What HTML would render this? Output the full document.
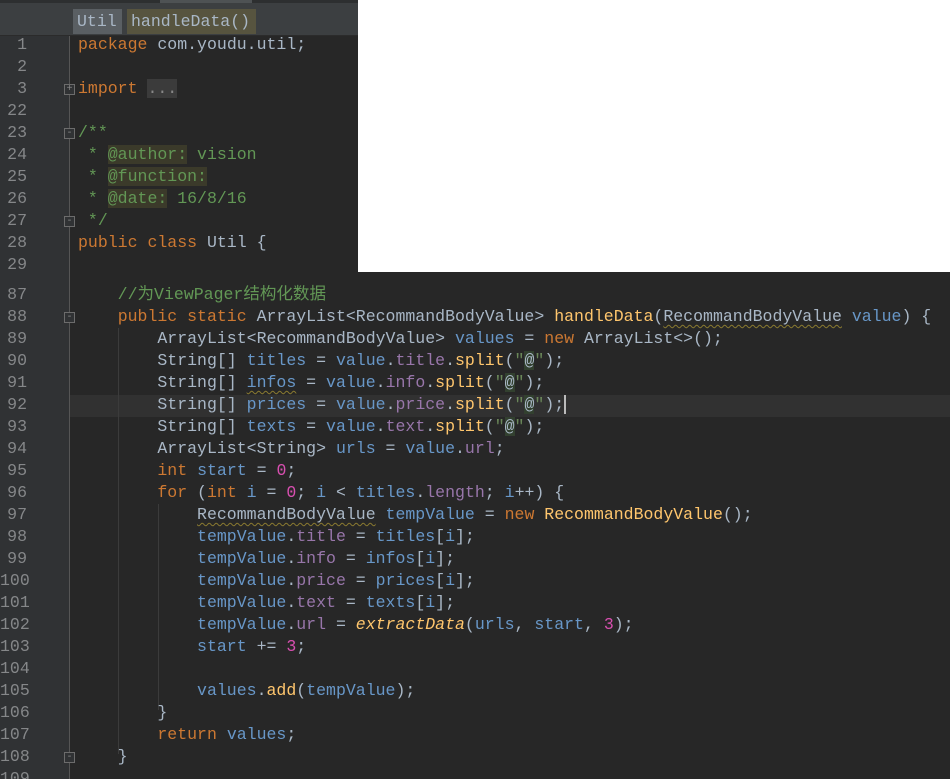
<!DOCTYPE html>
<html><head><meta charset="utf-8"><style>
*{margin:0;padding:0;box-sizing:border-box}
body{width:950px;height:779px;background:#fff;position:relative;overflow:hidden;font-family:"Liberation Mono","Noto Sans CJK SC",monospace;font-size:16.55px}
.panel{position:absolute;background:#272727;overflow:hidden}
.gut{position:absolute;left:0;top:0;bottom:0;width:70px;background:#303234;border-right:1px solid #555}
.ln{position:absolute;left:0;width:27px;text-align:right;color:#858789;height:22px;line-height:22px;white-space:pre}
.cl{position:absolute;left:78px;height:22px;line-height:22px;white-space:pre;color:#a9b7c6}
.k{color:#cc7832}.v{color:#6897c8}.f{color:#9876aa}.m{color:#ffc66d}.s{color:#6a8759}.n{color:#d84fb0}.c{color:#629755}
.at{background:#3b3a2a}.sa{background:#32402f;color:#a9b7c6}
.i{font-style:italic}
.w{text-decoration:underline wavy #8a7a30;text-decoration-thickness:1px;text-underline-offset:3px}
.fold{position:absolute;left:64px;width:11px;height:11px;border:1px solid #6c6c6c;background:#303234;color:#888;font-size:10px;line-height:9px;text-align:center}
.guide{position:absolute;width:1px;background:#3b3b3b}
</style></head><body>
<div style="position:absolute;left:0;top:0;width:358px;height:36px;background:#3c3f41;border-bottom:1px solid #2b2b2b"></div>
<div style="position:absolute;left:0;top:0;width:358px;height:3px;background:#2d2f30"></div>
<div style="position:absolute;left:160px;top:0;width:92px;height:3px;background:#4e5254"></div>
<div style="position:absolute;left:73px;top:9px;width:49px;height:25px;background:#5a5f63;color:#a9b7c6;line-height:25px;padding-left:4px;white-space:pre">Util</div>
<div style="position:absolute;left:127px;top:9px;width:129px;height:25px;background:#57543f;color:#a9b7c6;line-height:25px;padding-left:4px;white-space:pre">handleData()</div>

<div class="panel" style="left:0;top:36px;width:358px;height:236px">
<div class="gut"></div>
<div class="ln" style="top:-2px">1</div><div class="cl" style="top:-2px"><span class="k">package</span> com.youdu.util;</div>
<div class="ln" style="top:20px">2</div>
<div class="ln" style="top:42px">3</div><div class="fold" style="top:48px">+</div><div class="cl" style="top:42px"><span class="k">import</span> <span style="background:#3b3b3b;color:#888">...</span></div>
<div class="ln" style="top:64px">22</div>
<div class="ln" style="top:86px">23</div><div class="fold" style="top:92px">-</div><div class="cl c" style="top:86px">/**</div>
<div class="ln" style="top:108px">24</div><div class="cl c" style="top:108px"> * <span class="at">@author:</span> vision</div>
<div class="ln" style="top:130px">25</div><div class="cl c" style="top:130px"> * <span class="at">@function:</span></div>
<div class="ln" style="top:152px">26</div><div class="cl c" style="top:152px"> * <span class="at">@date:</span> 16/8/16</div>
<div class="ln" style="top:174px">27</div><div class="fold" style="top:180px">-</div><div class="cl c" style="top:174px"> */</div>
<div class="ln" style="top:196px">28</div><div class="cl" style="top:196px"><span class="k">public class</span> Util {</div>
<div class="ln" style="top:218px">29</div>
</div>

<div class="panel" style="left:0;top:272px;width:950px;height:507px">
<div class="gut"></div>
<div style="position:absolute;left:70px;top:123px;width:880px;height:22px;background:#313131"></div>
<div class="guide" style="left:118px;top:56px;height:426px"></div>
<div class="guide" style="left:158px;top:232px;height:206px"></div>
<div class="ln" style="top:12px">87</div><div class="cl c" style="top:12px">    //为ViewPager结构化数据</div>
<div class="ln" style="top:34px">88</div><div class="fold" style="top:40px">-</div><div class="cl" style="top:34px">    <span class="k">public static</span> ArrayList&lt;RecommandBodyValue&gt; <span class="m">handleData</span>(<span class="w">RecommandBodyValue</span> <span class="v">value</span>) {</div>
<div class="ln" style="top:56px">89</div><div class="cl" style="top:56px">        ArrayList&lt;RecommandBodyValue&gt; <span class="v">values</span> = <span class="k">new</span> ArrayList&lt;&gt;();</div>
<div class="ln" style="top:78px">90</div><div class="cl" style="top:78px">        String[] <span class="v">titles</span> = <span class="v">value</span>.<span class="f">title</span>.<span class="m">split</span>(<span class="s">"<span class="sa">@</span>"</span>);</div>
<div class="ln" style="top:100px">91</div><div class="cl" style="top:100px">        String[] <span class="v w">infos</span> = <span class="v">value</span>.<span class="f">info</span>.<span class="m">split</span>(<span class="s">"<span class="sa">@</span>"</span>);</div>
<div class="ln" style="top:122px">92</div><div class="cl" style="top:122px">        String[] <span class="v">prices</span> = <span class="v">value</span>.<span class="f">price</span>.<span class="m">split</span>(<span class="s">"<span class="sa">@</span>"</span>);<span style="border-left:2px solid #bbb"></span></div>
<div class="ln" style="top:144px">93</div><div class="cl" style="top:144px">        String[] <span class="v">texts</span> = <span class="v">value</span>.<span class="f">text</span>.<span class="m">split</span>(<span class="s">"<span class="sa">@</span>"</span>);</div>
<div class="ln" style="top:166px">94</div><div class="cl" style="top:166px">        ArrayList&lt;String&gt; <span class="v">urls</span> = <span class="v">value</span>.<span class="f">url</span>;</div>
<div class="ln" style="top:188px">95</div><div class="cl" style="top:188px">        <span class="k">int</span> <span class="v">start</span> = <span class="n">0</span>;</div>
<div class="ln" style="top:210px">96</div><div class="cl" style="top:210px">        <span class="k">for</span> (<span class="k">int</span> <span class="v">i</span> = <span class="n">0</span>; <span class="v">i</span> &lt; <span class="v">titles</span>.<span class="f">length</span>; <span class="v">i</span>++) {</div>
<div class="ln" style="top:232px">97</div><div class="cl" style="top:232px">            <span class="w">RecommandBodyValue</span> <span class="v">tempValue</span> = <span class="k">new</span> <span class="m">RecommandBodyValue</span>();</div>
<div class="ln" style="top:254px">98</div><div class="cl" style="top:254px">            <span class="v">tempValue</span>.<span class="f">title</span> = <span class="v">titles</span>[<span class="v">i</span>];</div>
<div class="ln" style="top:276px">99</div><div class="cl" style="top:276px">            <span class="v">tempValue</span>.<span class="f">info</span> = <span class="v">infos</span>[<span class="v">i</span>];</div>
<div class="ln" style="top:298px">100</div><div class="cl" style="top:298px">            <span class="v">tempValue</span>.<span class="f">price</span> = <span class="v">prices</span>[<span class="v">i</span>];</div>
<div class="ln" style="top:320px">101</div><div class="cl" style="top:320px">            <span class="v">tempValue</span>.<span class="f">text</span> = <span class="v">texts</span>[<span class="v">i</span>];</div>
<div class="ln" style="top:342px">102</div><div class="cl" style="top:342px">            <span class="v">tempValue</span>.<span class="f">url</span> = <span class="m i">extractData</span>(<span class="v">urls</span>, <span class="v">start</span>, <span class="n">3</span>);</div>
<div class="ln" style="top:364px">103</div><div class="cl" style="top:364px">            <span class="v">start</span> += <span class="n">3</span>;</div>
<div class="ln" style="top:386px">104</div>
<div class="ln" style="top:408px">105</div><div class="cl" style="top:408px">            <span class="v">values</span>.<span class="m">add</span>(<span class="v">tempValue</span>);</div>
<div class="ln" style="top:430px">106</div><div class="cl" style="top:430px">        }</div>
<div class="ln" style="top:452px">107</div><div class="cl" style="top:452px">        <span class="k">return</span> <span class="v">values</span>;</div>
<div class="ln" style="top:474px">108</div><div class="fold" style="top:480px">-</div><div class="cl" style="top:474px">    }</div>
<div class="ln" style="top:496px">109</div>
</div>
</body></html>
